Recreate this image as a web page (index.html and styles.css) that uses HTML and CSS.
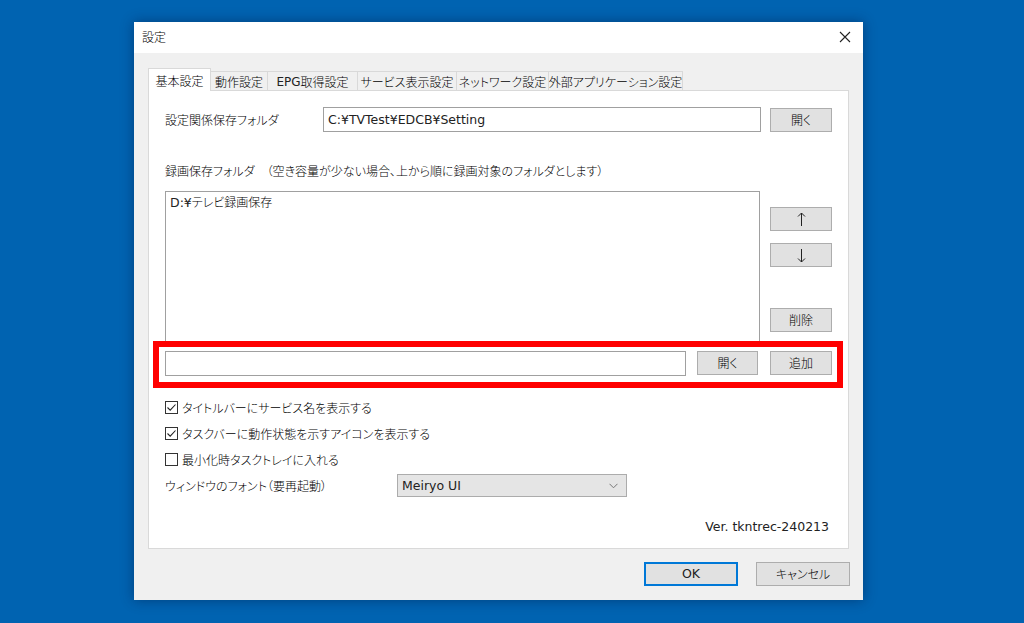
FILE: index.html
```html
<!DOCTYPE html>
<html lang="ja">
<head>
<meta charset="utf-8">
<title>設定</title>
<link rel="stylesheet" href="styles.css">
</head>
<body>
<div class="desktop">
  <div class="dialog">
    <div class="titlebar">
      <span class="title">設定</span>
      <span class="close">
        <svg width="12" height="12" viewBox="0 0 12 12"><path d="M1 1 L11 11 M11 1 L1 11" stroke="#222" stroke-width="1.1" fill="none"/></svg>
      </span>
    </div>
    <div class="client">
      <div class="tabs">
        <div class="tab active t1">基本設定</div>
        <div class="tab t2">動作設定</div>
        <div class="tab t3"><span class="latin">EPG</span>取得設定</div>
        <div class="tab t4">サービス表示設定</div>
        <div class="tab t5">ネットワーク設定</div>
        <div class="tab t6">外部アプリケーション設定</div>
      </div>
      <div class="panel">
        <div class="row-setting">
          <span class="label">設定関係保存フォルダ</span>
          <div class="edit path"><span class="latin">C:¥TVTest¥EDCB¥Setting</span></div>
          <button class="btn">開く</button>
        </div>
        <div class="caption">録画保存フォルダ　（空き容量が少ない場合、上から順に録画対象のフォルダとします）</div>
        <div class="folders">
          <div class="listbox"><div class="item"><span class="latin">D:¥</span>テレビ録画保存</div></div>
          <div class="side-btns">
            <button class="btn arrow"><svg width="9" height="15" viewBox="0 0 9 15"><path d="M4.5 1 V14 M1 4.5 L4.5 1 L8 4.5" stroke="#222" stroke-width="1" fill="none"/></svg></button>
            <button class="btn arrow"><svg width="9" height="15" viewBox="0 0 9 15"><path d="M4.5 1 V14 M1 10.5 L4.5 14 L8 10.5" stroke="#222" stroke-width="1" fill="none"/></svg></button>
            <button class="btn del">削除</button>
          </div>
        </div>
        <div class="add-row">
          <div class="edit add-edit"></div>
          <button class="btn open2">開く</button>
          <button class="btn">追加</button>
          <div class="highlight"></div>
        </div>
        <div class="checks">
          <div class="check"><span class="box"><svg width="11" height="11" viewBox="0 0 11 11"><path d="M1.5 5.5 L4.2 8.2 L9.5 2.5" stroke="#222" stroke-width="1.1" fill="none"/></svg></span>タイトルバーにサービス名を表示する</div>
          <div class="check"><span class="box"><svg width="11" height="11" viewBox="0 0 11 11"><path d="M1.5 5.5 L4.2 8.2 L9.5 2.5" stroke="#222" stroke-width="1.1" fill="none"/></svg></span>タスクバーに動作状態を示すアイコンを表示する</div>
          <div class="check"><span class="box"></span>最小化時タスクトレイに入れる</div>
        </div>
        <div class="font-row">
          <span class="font-label">ウィンドウのフォント（要再起動）</span>
          <div class="combo">
            <span class="latin">Meiryo UI</span>
            <svg width="9" height="6" viewBox="0 0 9 6"><path d="M0.5 0.8 L4.5 4.8 L8.5 0.8" stroke="#777" stroke-width="1" fill="none"/></svg>
          </div>
        </div>
        <div class="version"><span class="latin">Ver. tkntrec-240213</span></div>
      </div>
      <div class="footer">
        <button class="btn big ok"><span class="latin">OK</span></button>
        <button class="btn big">キャンセル</button>
      </div>
    </div>
  </div>
</div>
</body>
</html>
```

FILE: styles.css
```css
* { box-sizing: border-box; }
html, body {
  margin: 0;
  padding: 0;
}
body {
  width: 1024px;
  height: 623px;
  overflow: hidden;
  background: #0063b1;
  font-family: "Noto Sans CJK JP", "Noto Sans", sans-serif;
  font-size: 12px;
  font-weight: 300;
  font-feature-settings: "palt";
  color: #000;
}
.latin {
  font-family: "DejaVu Sans", "Noto Sans CJK JP", sans-serif;
  font-size: 12.5px;
  font-weight: 400;
  color: #222;
}
.desktop {
  padding: 22px 0 0 134px;
}
.dialog {
  width: 729px;
  height: 578px;
  background: #fff;
  box-shadow: 0 0 12px rgba(0, 20, 60, 0.45);
  display: flex;
  flex-direction: column;
}
.titlebar {
  height: 31px;
  display: flex;
  align-items: center;
  justify-content: space-between;
  padding: 0 12px 2px 8px;
  background: #fff;
}
.title { font-size: 12px; }
.close { display: flex; width: 12px; height: 12px; }

.client {
  flex: 1;
  background: #f0f0f0;
  padding: 15px 14px 14px 14px;
  display: flex;
  flex-direction: column;
}
.tabs {
  height: 22px;
  display: flex;
  align-items: flex-end;
  position: relative;
  z-index: 1;
}
.tab {
  height: 19px;
  border: 1px solid #d9d9d9;
  border-bottom: none;
  border-left: none;
  background: #f0f0f0;
  display: flex;
  align-items: center;
  justify-content: center;
  white-space: nowrap;
  line-height: 1;
  padding-top: 1px;
}
.tab .latin { font-size: 12px; }
.tab.active {
  height: 23px;
  margin-bottom: -1px;
  background: #fff;
  border-left: 1px solid #d9d9d9;
}
.t1 { width: 63px; }
.t2 { width: 57px; }
.t3 { width: 90px; }
.t4 { width: 99px; }
.t5 { width: 92px; }
.t6 { width: 134px; }

.panel {
  height: 459px;
  background: #fff;
  border: 1px solid #d9d9d9;
  padding: 16px;
  display: flex;
  flex-direction: column;
}
.row-setting {
  display: flex;
  align-items: center;
  height: 25px;
}
.label { width: 158px; }
.edit {
  height: 25px;
  border: 1px solid #a0a0a0;
  background: #fff;
  display: flex;
  align-items: center;
  padding-left: 4px;
}
.path { width: 438px; }
.btn {
  font: inherit;
  color: #000;
  height: 24px;
  width: 62px;
  background: #e1e1e1;
  border: 1px solid #adadad;
  padding: 0;
  margin: 0;
  line-height: 1;
  display: flex;
  align-items: center;
  justify-content: center;
}
.row-setting .btn { margin-left: 9px; }

.caption {
  margin-top: 30px;
  height: 18px;
  line-height: 18px;
  white-space: nowrap;
}
.folders {
  margin-top: 11px;
  height: 154px;
  display: flex;
}
.listbox {
  width: 595px;
  height: 154px;
  border: 1px solid #a0a0a0;
  border-bottom: none;
  padding: 1px 4px;
}
.item { line-height: 18px; }
.side-btns {
  margin-left: 10px;
  padding-top: 16px;
  display: flex;
  flex-direction: column;
}
.side-btns .arrow { margin-bottom: 12px; }
.side-btns .del { margin-top: 29px; }

.add-row {
  position: relative;
  margin-top: 6px;
  height: 25px;
  display: flex;
  align-items: flex-start;
}
.add-edit { width: 521px; }
.add-row .open2 { width: 61px; margin-left: 11px; margin-right: 12px; }
.highlight {
  position: absolute;
  left: -12px;
  top: -10px;
  right: -11px;
  bottom: -12px;
  border: 6px solid #ff0000;
  pointer-events: none;
}

.checks {
  margin-top: 18px;
  display: flex;
  flex-direction: column;
}
.check {
  height: 26px;
  display: flex;
  align-items: center;
  white-space: nowrap;
}
.box {
  width: 13px;
  height: 13px;
  border: 1px solid #333;
  margin-right: 4px;
  display: flex;
  align-items: center;
  justify-content: center;
  background: #fff;
}
.font-row {
  margin-top: 2px;
  height: 23px;
  display: flex;
  align-items: center;
}
.font-label { width: 232px; }
.combo {
  width: 230px;
  height: 23px;
  background: #e5e5e5;
  border: 1px solid #acacac;
  display: flex;
  align-items: center;
  justify-content: space-between;
  padding: 0 8px 0 4px;
}
.version {
  margin-top: 20px;
  text-align: right;
  padding-right: 3px;
  line-height: 18px;
}
.footer {
  margin-top: 13px;
  display: flex;
  justify-content: flex-end;
  margin-right: -1px;
}
.btn.big { width: 94px; height: 24px; }
.btn.ok {
  border: 1px solid #0078d7;
  box-shadow: inset 0 0 0 1px #0078d7;
  margin-right: 18px;
}
```
